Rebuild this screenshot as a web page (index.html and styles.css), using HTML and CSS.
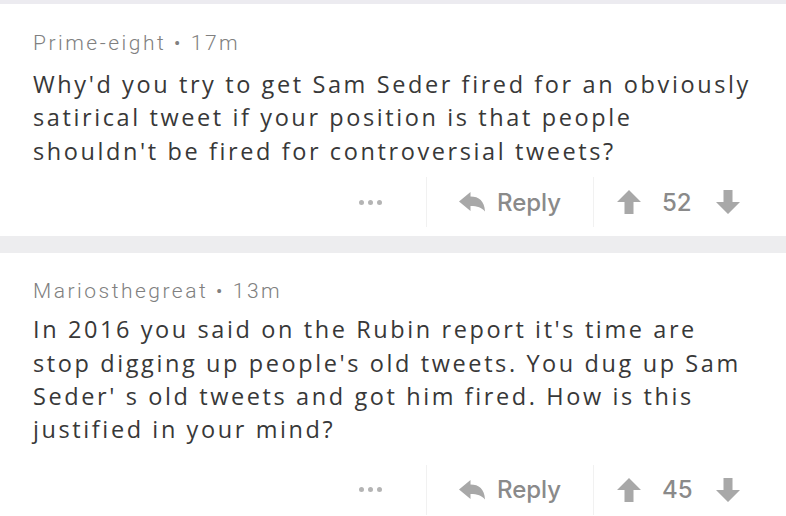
FILE: index.html
```html
<!DOCTYPE html>
<html>
<head>
<meta charset="utf-8">
<link rel="stylesheet" href="styles.css">
</head>
<body>
<div class="topbar"></div>
<div class="comment first">
  <div class="meta">Prime-eight • 17m</div>
  <p class="text">Why'd you try to get Sam Seder fired for an obviously<br>satirical tweet if your position is that people<br>shouldn't be fired for controversial tweets?</p>
  <div class="actions">
    <div class="more"><span></span><span></span><span></span></div>
    <div class="reply">
      <svg class="reply-icon" viewBox="0 0 26 20"><path d="M0 9.5 L11.5 0 L11.5 4.5 C20 4.5 25.5 9 26 19.5 C22.5 15.5 18.5 14 11.5 14 L11.5 19 Z" fill="#a8a8a8"/></svg>
      <span>Reply</span>
    </div>
    <div class="vote">
      <svg class="arrow" viewBox="0 0 24 24"><path d="M12 0 L24 12 L16.5 12 L16.5 24 L7.5 24 L7.5 12 L0 12 Z" fill="#a8a8a8"/></svg>
      <span class="count">52</span>
      <svg class="arrow" viewBox="0 0 24 24"><path d="M12 24 L24 12 L16.5 12 L16.5 0 L7.5 0 L7.5 12 L0 12 Z" fill="#a8a8a8"/></svg>
    </div>
  </div>
</div>
<div class="band"></div>
<div class="comment second">
  <div class="meta">Mariosthegreat • 13m</div>
  <p class="text">In 2016 you said on the Rubin report it's time are<br>stop digging up people's old tweets. You dug up Sam<br>Seder' s old tweets and got him fired. How is this<br>justified in your mind?</p>
  <div class="actions">
    <div class="more"><span></span><span></span><span></span></div>
    <div class="reply">
      <svg class="reply-icon" viewBox="0 0 26 20"><path d="M0 9.5 L11.5 0 L11.5 4.5 C20 4.5 25.5 9 26 19.5 C22.5 15.5 18.5 14 11.5 14 L11.5 19 Z" fill="#a8a8a8"/></svg>
      <span>Reply</span>
    </div>
    <div class="vote">
      <svg class="arrow" viewBox="0 0 24 24"><path d="M12 0 L24 12 L16.5 12 L16.5 24 L7.5 24 L7.5 12 L0 12 Z" fill="#a8a8a8"/></svg>
      <span class="count">45</span>
      <svg class="arrow" viewBox="0 0 24 24"><path d="M12 24 L24 12 L16.5 12 L16.5 0 L7.5 0 L7.5 12 L0 12 Z" fill="#a8a8a8"/></svg>
    </div>
  </div>
</div>
</body>
</html>
```
FILE: styles.css
```css
html, body {
  margin: 0;
  padding: 0;
  background: #ffffff;
}
body {
  width: 786px;
  height: 516px;
  overflow: hidden;
  font-family: "Open Sans", "Noto Sans", sans-serif;
}
.topbar {
  height: 4px;
  background: #ecebf0;
}
.band {
  height: 17px;
  background: #ededef;
}
.comment {
  padding: 0 30px 0 33px;
}
.comment.first {
  padding-top: 26px;
}
.comment.second {
  padding-top: 25px;
}
.meta {
  font-family: "Roboto", sans-serif;
  font-weight: 300;
  font-size: 21px;
  line-height: 26px;
  color: #808080;
  letter-spacing: 2.5px;
}
.text {
  margin: 12px 0 0;
  font-size: 23.5px;
  line-height: 33.4px;
  letter-spacing: 2.6px;
  color: #383838;
  white-space: nowrap;
}
.second .text {
  margin-top: 9px;
}
.actions {
  display: flex;
  justify-content: flex-end;
  align-items: stretch;
  height: 50px;
  margin: 9px -7px 9px 0;
  font-family: "Inter", sans-serif;
  font-weight: 500;
  font-size: 24px;
  color: #8a8a8a;
}
.second .actions {
  margin-top: 18px;
}
.more {
  width: 112px;
  display: flex;
  align-items: center;
  justify-content: center;
  gap: 4px;
}
.more span {
  width: 5px;
  height: 5px;
  border-radius: 50%;
  background: #b4b4b4;
}
.reply {
  width: 166px;
  border-left: 1px solid #f1f1f1;
  display: flex;
  align-items: center;
  justify-content: center;
  gap: 12px;
}
.reply-icon {
  width: 26px;
  height: 20px;
}
.vote {
  border-left: 1px solid #f1f1f1;
  padding: 0 23px;
  display: flex;
  align-items: center;
}
.arrow {
  width: 24px;
  height: 24px;
}
.count {
  width: 30px;
  margin: 0 24px 0 21px;
}
```
